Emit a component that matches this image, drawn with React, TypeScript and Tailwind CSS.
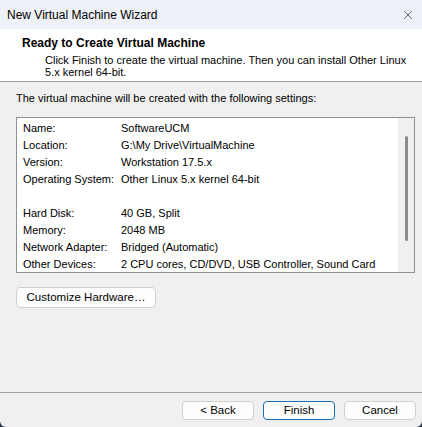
import { X } from "lucide-react";

const rows: [string, string][] = [
  ["Name:", "SoftwareUCM"],
  ["Location:", "G:\\My Drive\\VirtualMachine"],
  ["Version:", "Workstation 17.5.x"],
  ["Operating System:", "Other Linux 5.x kernel 64-bit"],
  ["", ""],
  ["Hard Disk:", "40 GB, Split"],
  ["Memory:", "2048 MB"],
  ["Network Adapter:", "Bridged (Automatic)"],
  ["Other Devices:", "2 CPU cores, CD/DVD, USB Controller, Sound Card"],
];

function WizardButton({ label, primary }: { label: string; primary?: boolean }) {
  return (
    <button
      className={
        "h-[19px] w-[72px] rounded-[4px] bg-[#fdfdfd] text-[11.5px] leading-none text-black " +
        (primary ? "border border-[#1f6fb8]" : "border border-[#d0d0d0]")
      }
    >
      {label}
    </button>
  );
}

export default function App() {
  return (
    <div className="h-[427px] w-[422px] bg-[#2b3440]">
      <div
        className="flex h-full w-full flex-col overflow-hidden rounded-b-[6px] bg-[#f0f0f0] text-[11px] text-black"
        style={{ fontFamily: '"Liberation Sans", Arial, sans-serif' }}
      >
        {/* title bar */}
        <div className="flex h-[29px] items-center justify-between bg-[#eef2f8] pl-[7px] pr-[7px]">
          <span className="text-[12px]">New Virtual Machine Wizard</span>
          <X size={14} strokeWidth={1.1} className="text-[#1a1a1a]" />
        </div>

        {/* header */}
        <div className="h-[53px] border-b border-[#a0a0a0] bg-white pl-[22px] pt-[6px]">
          <div className="text-[12px] font-bold leading-[16px]">Ready to Create Virtual Machine</div>
          <div className="pl-[23px] pr-[10px] pt-[3px] text-[11px] leading-[12px]">
            Click Finish to create the virtual machine. Then you can install Other Linux 5.x kernel 64-bit.
          </div>
        </div>

        {/* body */}
        <div className="flex flex-1 flex-col px-[16px] pt-[8px]">
          <div className="leading-[16px]">The virtual machine will be created with the following settings:</div>

          <div className="mt-[11px] flex h-[156px] w-[399px] border border-[#8b8f96] bg-white">
            <div className="flex-1 pt-[2px] pl-[6px]">
              {rows.map(([k, v], i) => (
                <div key={i} className="flex h-[17px] items-center whitespace-nowrap">
                  <span className="w-[98px] shrink-0">{k}</span>
                  <span>{v}</span>
                </div>
              ))}
            </div>
            <div className="flex w-[16px] justify-center bg-[#f0f0f0] pt-[18px]">
              <div className="h-[105px] w-[3px] rounded-full bg-[#8a8a8a]" />
            </div>
          </div>

          <button className="mt-[14px] h-[21px] w-[140px] rounded-[4px] border border-[#d0d0d0] bg-[#fdfdfd] text-[11.5px] leading-none">
            Customize Hardware…
          </button>
        </div>

        {/* footer */}
        <div className="flex h-[35px] items-start justify-end gap-[9px] border-t border-[#a0a0a0] pr-[6px] pt-[8px]">
          <WizardButton label="< Back" />
          <WizardButton label="Finish" primary />
          <WizardButton label="Cancel" />
        </div>
      </div>
    </div>
  );
}
